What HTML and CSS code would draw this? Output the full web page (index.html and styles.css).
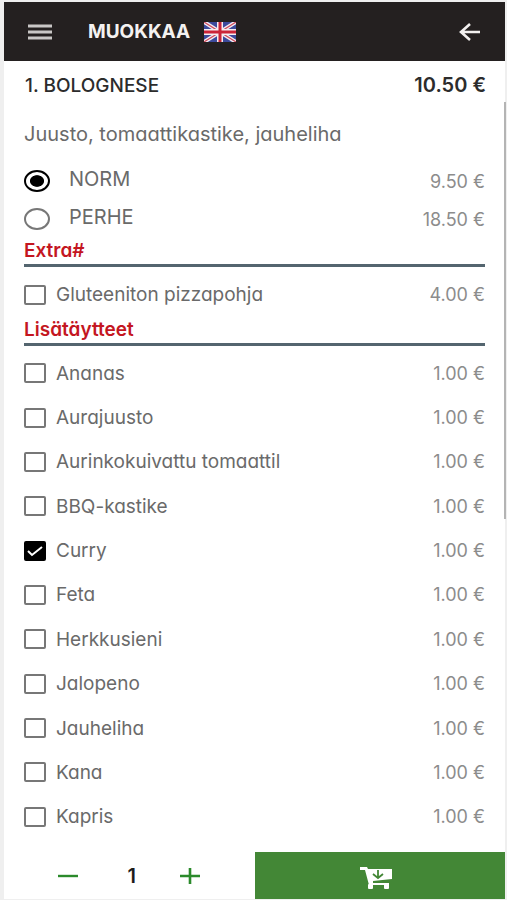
FILE: index.html
```html
<!DOCTYPE html>
<html lang="fi">
<head>
  <meta charset="UTF-8">
  <meta name="viewport" content="width=device-width, initial-scale=1.0">
  <title>Muokkaa</title>
  <link rel="stylesheet" href="styles.css">
</head>
<body>
  <div class="app">
    <header class="topbar">
      <button class="icon-button" type="button" aria-label="Valikko">
        <svg width="24" height="16" viewBox="0 0 24 16"><path d="M0 2h24M0 8h24M0 14h24" stroke="#c9c7c6" stroke-width="3"/></svg>
      </button>
      <h1>MUOKKAA</h1>
      <button class="icon-button" type="button" aria-label="English">
        <svg width="32" height="20" viewBox="0 0 32 20">
          <rect width="32" height="20" fill="#3c4a9c"/>
          <path d="M0 0l32 20M32 0L0 20" stroke="#f4eef2" stroke-width="4"/>
          <path d="M0 0l32 20M32 0L0 20" stroke="#cf4a5c" stroke-width="1.2"/>
          <path d="M16 0v20M0 10h32" stroke="#f4eef2" stroke-width="6"/>
          <path d="M16 0v20M0 10h32" stroke="#cc2438" stroke-width="3"/>
        </svg>
      </button>
      <button class="icon-button back" type="button" aria-label="Takaisin">
        <svg width="22" height="18" viewBox="0 0 22 18"><path d="M21 9H2M11 1L2 9l9 8" fill="none" stroke="#f2f0ef" stroke-width="2.6"/></svg>
      </button>
    </header>

    <div class="product">
      <h2>1. BOLOGNESE</h2>
      <span class="total">10.50 €</span>
    </div>

    <main class="content">
      <p class="description">Juusto, tomaattikastike, jauheliha</p>

      <div class="size">
        <input type="radio" name="size" id="norm" checked>
        <label for="norm">NORM</label>
        <span class="price">9.50 €</span>
      </div>
      <div class="size">
        <input type="radio" name="size" id="perhe">
        <label for="perhe">PERHE</label>
        <span class="price">18.50 €</span>
      </div>

      <h3>Extra#</h3>
      <div class="extras">
        <div class="option"><input type="checkbox" id="gluteeniton"><label for="gluteeniton">Gluteeniton pizzapohja</label><span class="price">4.00 €</span></div>
      </div>

      <h3>Lisätäytteet</h3>
      <div class="toppings">
        <div class="option"><input type="checkbox" id="ananas"><label for="ananas">Ananas</label><span class="price">1.00 €</span></div>
        <div class="option"><input type="checkbox" id="aurajuusto"><label for="aurajuusto">Aurajuusto</label><span class="price">1.00 €</span></div>
        <div class="option"><input type="checkbox" id="tomaatti"><label for="tomaatti">Aurinkokuivattu tomaattil</label><span class="price">1.00 €</span></div>
        <div class="option"><input type="checkbox" id="bbq"><label for="bbq">BBQ-kastike</label><span class="price">1.00 €</span></div>
        <div class="option"><input type="checkbox" id="curry" checked><label for="curry">Curry</label><span class="price">1.00 €</span></div>
        <div class="option"><input type="checkbox" id="feta"><label for="feta">Feta</label><span class="price">1.00 €</span></div>
        <div class="option"><input type="checkbox" id="herkkusieni"><label for="herkkusieni">Herkkusieni</label><span class="price">1.00 €</span></div>
        <div class="option"><input type="checkbox" id="jalopeno"><label for="jalopeno">Jalopeno</label><span class="price">1.00 €</span></div>
        <div class="option"><input type="checkbox" id="jauheliha"><label for="jauheliha">Jauheliha</label><span class="price">1.00 €</span></div>
        <div class="option"><input type="checkbox" id="kana"><label for="kana">Kana</label><span class="price">1.00 €</span></div>
        <div class="option"><input type="checkbox" id="kapris"><label for="kapris">Kapris</label><span class="price">1.00 €</span></div>
      </div>
    </main>

    <footer class="bottombar">
      <div class="quantity">
        <button class="icon-button" type="button" aria-label="Vähennä">
          <svg width="20" height="20" viewBox="0 0 20 20"><path d="M0 10h20" stroke="#2b8a2b" stroke-width="2.4"/></svg>
        </button>
        <output>1</output>
        <button class="icon-button" type="button" aria-label="Lisää">
          <svg width="20" height="20" viewBox="0 0 20 20"><path d="M0 10h20M10 2v16" stroke="#2b8a2b" stroke-width="2.6"/></svg>
        </button>
      </div>
      <button class="add" type="button" aria-label="Lisää ostoskoriin">
        <svg width="32" height="24" viewBox="0 0 32 24">
          <path d="M0 1h7l1 2h24v10l-19 2v2h16v2H9L5 4H0z" fill="#fff"/>
          <path d="M18 4v8M13 8l5 4 5-4" fill="none" stroke="#438736" stroke-width="1.8"/>
          <rect x="8" y="18" width="5" height="5" rx="1" fill="#fff"/>
          <rect x="24" y="18" width="5" height="5" rx="1" fill="#fff"/>
        </svg>
      </button>
    </footer>

    <div class="scrollbar"></div>
  </div>
</body>
</html>
```
FILE: styles.css
```css
* {
  box-sizing: border-box;
}

body {
  margin: 0;
  background: #efefef;
  color: #6a6a6a;
  font-family: Inter, "Noto Sans", sans-serif;
  font-feature-settings: "cv11";
  font-size: 19px;
}

.app {
  position: relative;
  display: flex;
  flex-direction: column;
  min-height: 100vh;
  padding: 2px 2px 1px 4px;
}

h1, h2, h3, p {
  margin: 0;
}

.icon-button {
  display: flex;
  padding: 0;
  border: none;
  background: none;
  cursor: pointer;
}

.topbar {
  display: flex;
  align-items: center;
  height: 59px;
  padding: 0 24px;
  background: #242020;
}

.topbar h1 {
  margin: 0 14px 0 36px;
  color: #f4f2f1;
  font-size: 19px;
  font-weight: 700;
}

.back {
  margin-left: auto;
}

.product {
  display: flex;
  align-items: center;
  justify-content: space-between;
  height: 48px;
  padding: 0 19px 0 21px;
  background: #fff;
  color: #2c2c2c;
}

.product h2 {
  font-size: 19px;
  font-weight: 500;
}

.total {
  font-size: 20px;
  font-weight: 600;
}

.content {
  display: flex;
  flex: 1;
  flex-direction: column;
  padding: 0 20px 13px;
  background: #fff;
}

.description {
  padding-bottom: 3px;
  font-size: 20px;
  line-height: 50px;
}

.size, .option {
  display: flex;
  align-items: center;
}

.size {
  height: 38px;
}

.size label {
  flex: 1;
  padding: 0 0 4px 19px;
  font-size: 20px;
}

.option label {
  flex: 1;
  padding-left: 10px;
}

.price {
  color: #8c8c8c;
  font-size: 18px;
}

h3 {
  border-bottom: 3px solid #54656f;
  color: #c4161f;
  font-size: 19px;
  font-weight: 600;
  line-height: 26px;
}

.extras {
  padding-top: 5px;
}

.extras .option {
  height: 45px;
}

.toppings {
  display: flex;
  flex: 1;
  flex-direction: column;
  padding-top: 5px;
}

.toppings .option {
  flex: 1;
}

input {
  appearance: none;
  margin: 0;
  border: 2px solid #777;
  background: #fff;
}

input[type="radio"] {
  width: 26px;
  height: 22px;
  border-radius: 50%;
}

input[type="radio"]:checked {
  border-color: #000;
  background: radial-gradient(closest-side, #000 60%, #fff 68%);
}

input[type="checkbox"] {
  width: 22px;
  height: 20px;
  border-radius: 2px;
}

input[type="checkbox"]:checked {
  border-color: #000;
  background: #000 url("data:image/svg+xml,%3Csvg xmlns='http://www.w3.org/2000/svg' viewBox='0 0 18 16'%3E%3Cpath d='M2 8l4 4L16 4' fill='none' stroke='white' stroke-width='2'/%3E%3C/svg%3E") center / 18px 16px no-repeat;
}

.bottombar {
  display: grid;
  grid-template-columns: 1fr 1fr;
  height: 47px;
}

.quantity {
  display: flex;
  align-items: center;
  justify-content: space-between;
  padding: 0 55px 0 54px;
  background: #fff;
}

.quantity output {
  padding-left: 6px;
  color: #1c1c1c;
  font-size: 20px;
  font-weight: 600;
}

.add {
  display: flex;
  align-items: center;
  justify-content: center;
  padding: 4px 8px 0 0;
  border: none;
  background: #438736;
  cursor: pointer;
}

/* thumb lies over the list, starting just under the product name */
.scrollbar {
  position: absolute;
  top: 102px;
  right: 1px;
  width: 2px;
  height: 417px;
  background: #b4b4b4;
}
```
